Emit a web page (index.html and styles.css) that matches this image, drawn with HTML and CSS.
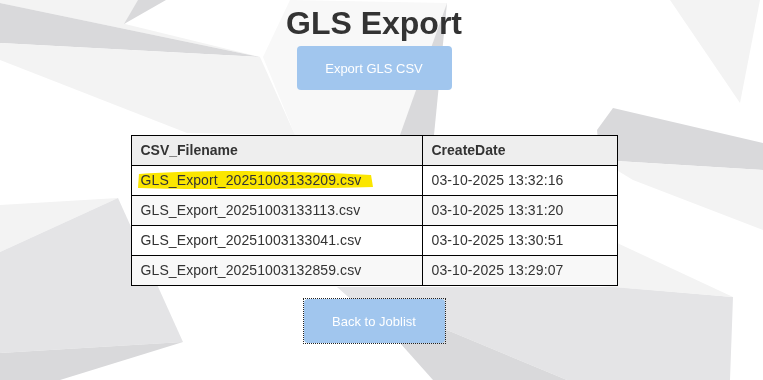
FILE: index.html
```html
<!DOCTYPE html>
<html lang="en">
  <head>
    <meta charset="UTF-8" />
    <meta name="viewport" content="width=device-width, initial-scale=1.0" />
    <title>GLS Export</title>
    <link rel="stylesheet" href="styles.css">
  </head>
  <body>
    <!-- low poly background -->
    <svg class="backdrop" viewBox="0 0 763 380" preserveAspectRatio="none" aria-hidden="true">
      <polygon class="light" points="0,0 140,0 125,24 260,57 0,3" />
      <polygon class="dark" points="0,3 260,57 0,43" />
      <polygon class="dark" points="138,0 166,0 124,24" />
      <polygon class="faint" points="290,0 447,3 400,135 295,135 263,57" />
      <polygon class="light" points="0,43 260,57 295,135 187,133 0,60" />
      <polygon class="dark" points="447,3 434,135 400,135" />
      <polygon class="light" points="670,0 760,0 740,103" />
      <polygon class="dark" points="613,108 763,143 763,170 600,160 597,130" />
      <polygon class="light" points="600,160 763,170 763,230 633,180" />
      <polygon class="mid" points="337,287 617,287 733,297 730,380 567,380 447,330 400,343" />
      <polygon class="light" points="600,235 733,297 600,286" />
      <polygon class="dark" points="400,343 447,330 567,380 433,380" />
      <polygon class="light" points="0,205 118,198 0,252" />
      <polygon class="mid" points="0,252 118,198 183,342 0,353" />
      <polygon class="dark" points="0,353 183,342 60,380 0,380" />
    </svg>

    <main class="page">
      <h1>GLS Export</h1>
      <button class="btn">Export GLS CSV</button>

      <table class="files">
        <colgroup>
          <col class="col-name" />
          <col class="col-date" />
        </colgroup>
        <thead>
          <tr>
            <th>CSV_Filename</th>
            <th>CreateDate</th>
          </tr>
        </thead>
        <tbody>
          <tr>
            <td>
              <span class="marked">
                <svg class="marker" viewBox="0 0 240 20" preserveAspectRatio="none" aria-hidden="true">
                  <path d="M2,4 C60,0 150,0 237,5 L239,17 C150,19 60,20 1,18 Z" />
                </svg>
                <span class="marked-text">GLS_Export_20251003133209.csv</span>
              </span>
            </td>
            <td>03-10-2025 13:32:16</td>
          </tr>
          <tr>
            <td>GLS_Export_20251003133113.csv</td>
            <td>03-10-2025 13:31:20</td>
          </tr>
          <tr>
            <td>GLS_Export_20251003133041.csv</td>
            <td>03-10-2025 13:30:51</td>
          </tr>
          <tr>
            <td>GLS_Export_20251003132859.csv</td>
            <td>03-10-2025 13:29:07</td>
          </tr>
        </tbody>
      </table>

      <span class="focus-ring">
        <button class="btn btn-back">Back to Joblist</button>
      </span>
    </main>
  </body>
</html>
```

FILE: styles.css
```css
* {
  padding: 0;
  margin: 0;
  box-sizing: border-box;
}
html {
  font-size: 14px;
  font-family: 'Liberation Sans', Arial, sans-serif;
  color: #333;
  background-color: #fff;
}
body {
  min-height: 100vh;
  overflow: hidden;
}
.backdrop {
  position: fixed;
  top: 0;
  left: 0;
  width: 763px;
  height: 380px;
  z-index: -1;
}
.backdrop .faint {
  fill: #f8f8f8;
}
.backdrop .light {
  fill: #f3f3f3;
}
.backdrop .mid {
  fill: #e4e4e6;
}
.backdrop .dark {
  fill: #d9d9db;
}
.page {
  width: 748px;
  display: flex;
  flex-direction: column;
  align-items: center;
}
h1 {
  margin-top: 5px;
  font-size: 32px;
  line-height: 36px;
  font-weight: 700;
  color: #333;
}
.btn {
  border: none;
  border-radius: 4px;
  background-color: #a1c6ee;
  color: #fff;
  font-family: inherit;
  font-size: 13px;
  height: 44px;
}
h1 + .btn {
  margin-top: 5px;
  width: 155px;
}
.files {
  margin-top: 45px;
  width: 486px;
  border-collapse: collapse;
  border: 1px solid #000;
  table-layout: fixed;
}
.col-name {
  width: 291px;
}
.col-date {
  width: 195px;
}
.files th,
.files td {
  border: 1px solid #000;
  padding: 5px 9px;
  line-height: 19px;
  text-align: left;
  white-space: nowrap;
}
.files td {
  letter-spacing: 0.1px;
}
.files th {
  background-color: #eee;
  font-weight: 700;
}
.files tbody tr {
  background-color: #fff;
}
.files tbody tr:nth-child(even) {
  background-color: #f8f8f8;
}
.marked {
  position: relative;
  display: inline-block;
}
.marker {
  position: absolute;
  left: -4px;
  top: -1px;
  width: 237px;
  height: 20px;
  fill: #fbe600;
}
.marked-text {
  position: relative;
}
.focus-ring {
  margin-top: 12px;
  display: inline-block;
  border: 1px dotted #222;
}
.btn-back {
  display: block;
  width: 141px;
}
```
